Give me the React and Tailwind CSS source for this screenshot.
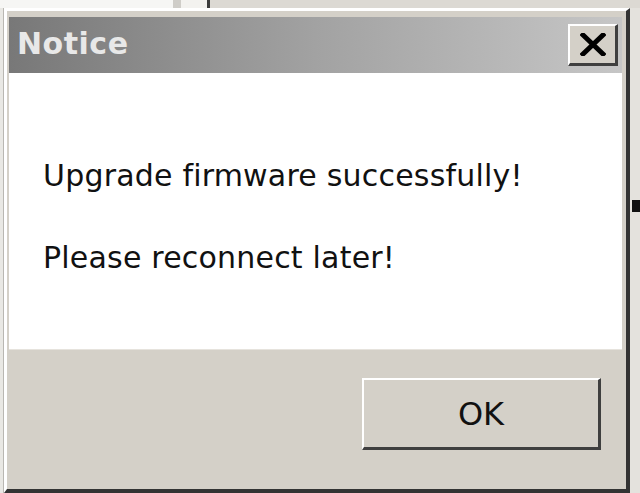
import React from 'react';

// Classic Windows "Notice" dialog, scaled up
function CloseGlyph() {
  return (
    <svg width="26" height="23" viewBox="0 0 26 23">
      <path d="M3 2 L23 21 M23 2 L3 21" stroke="#000" strokeWidth="5" strokeLinecap="square" fill="none" />
    </svg>
  );
}

export default function App() {
  const font = { fontFamily: '"DejaVu Sans", Verdana, sans-serif' };

  return (
    <div className="w-[640px] h-[493px] overflow-hidden flex flex-col bg-[#ecebe8]" style={font}>
      {/* strip of whatever is behind the dialog */}
      <div className="h-[8px] flex shrink-0">
        <div className="w-[173px] bg-[#f6f6f4]" />
        <div className="w-[8px] bg-[#cfcdc8]" />
        <div className="w-[26px] bg-[#f3f2ef]" />
        <div className="w-[3px] bg-[#3c3c3c]" />
        <div className="flex-1 bg-[#dcd9d3]" />
      </div>

      <div className="flex flex-1">
        <div className="w-[4px] bg-[#e9e8e4] border-r border-[#b9b7b2]" />

        {/* window */}
        <div className="w-[626px] flex flex-col bg-[#d4d0c8] border-t-[3px] border-l-[3px] border-t-white border-l-white border-r-[4px] border-r-[#333333] border-b-[4px] border-b-[#333333] pt-[6px] pl-[2px] pr-[4px]">
          {/* title bar */}
          <div className="h-[56px] flex items-start justify-between bg-gradient-to-r from-[#787878] via-[#a2a2a2] to-[#c6c6c6]">
            <span className="pl-[8px] pt-[10px] text-[30px] leading-[34px] font-bold text-[#e8e8e8] tracking-[0.5px]">Notice</span>
            <button className="mt-[7px] mr-[4px] w-[50px] h-[42px] flex items-center justify-center bg-[#d4d0c8] border-t-2 border-l-2 border-t-white border-l-white border-r-[3px] border-b-[3px] border-r-[#3f3f3f] border-b-[#3f3f3f]">
              <CloseGlyph />
            </button>
          </div>

          {/* message */}
          <div className="h-[276px] bg-white flex flex-col pl-[34px] pt-[86px] gap-[48px] text-[30px] leading-[34px] tracking-[0.2px] text-[#111111]">
            <p>Upgrade firmware successfully!</p>
            <p>Please reconnect later!</p>
          </div>

          {/* footer */}
          <div className="flex-1 bg-[#d4d0c8] border-t border-[#e6e3dd] flex justify-end items-start pt-[28px] pr-[21px]">
            <button className="w-[239px] h-[72px] flex items-center justify-center bg-[#d4d0c8] border-t-2 border-l-2 border-t-white border-l-white border-r-[3px] border-b-[3px] border-r-[#3f3f3f] border-b-[#3f3f3f] text-[32px] text-[#111111]">
              OK
            </button>
          </div>
        </div>

        <div className="flex-1 bg-[#e4e2dd] flex flex-col">
          <div className="h-[192px]" />
          <div className="ml-[2px] w-[8px] h-[12px] bg-[#111111]" />
        </div>
      </div>
    </div>
  );
}
